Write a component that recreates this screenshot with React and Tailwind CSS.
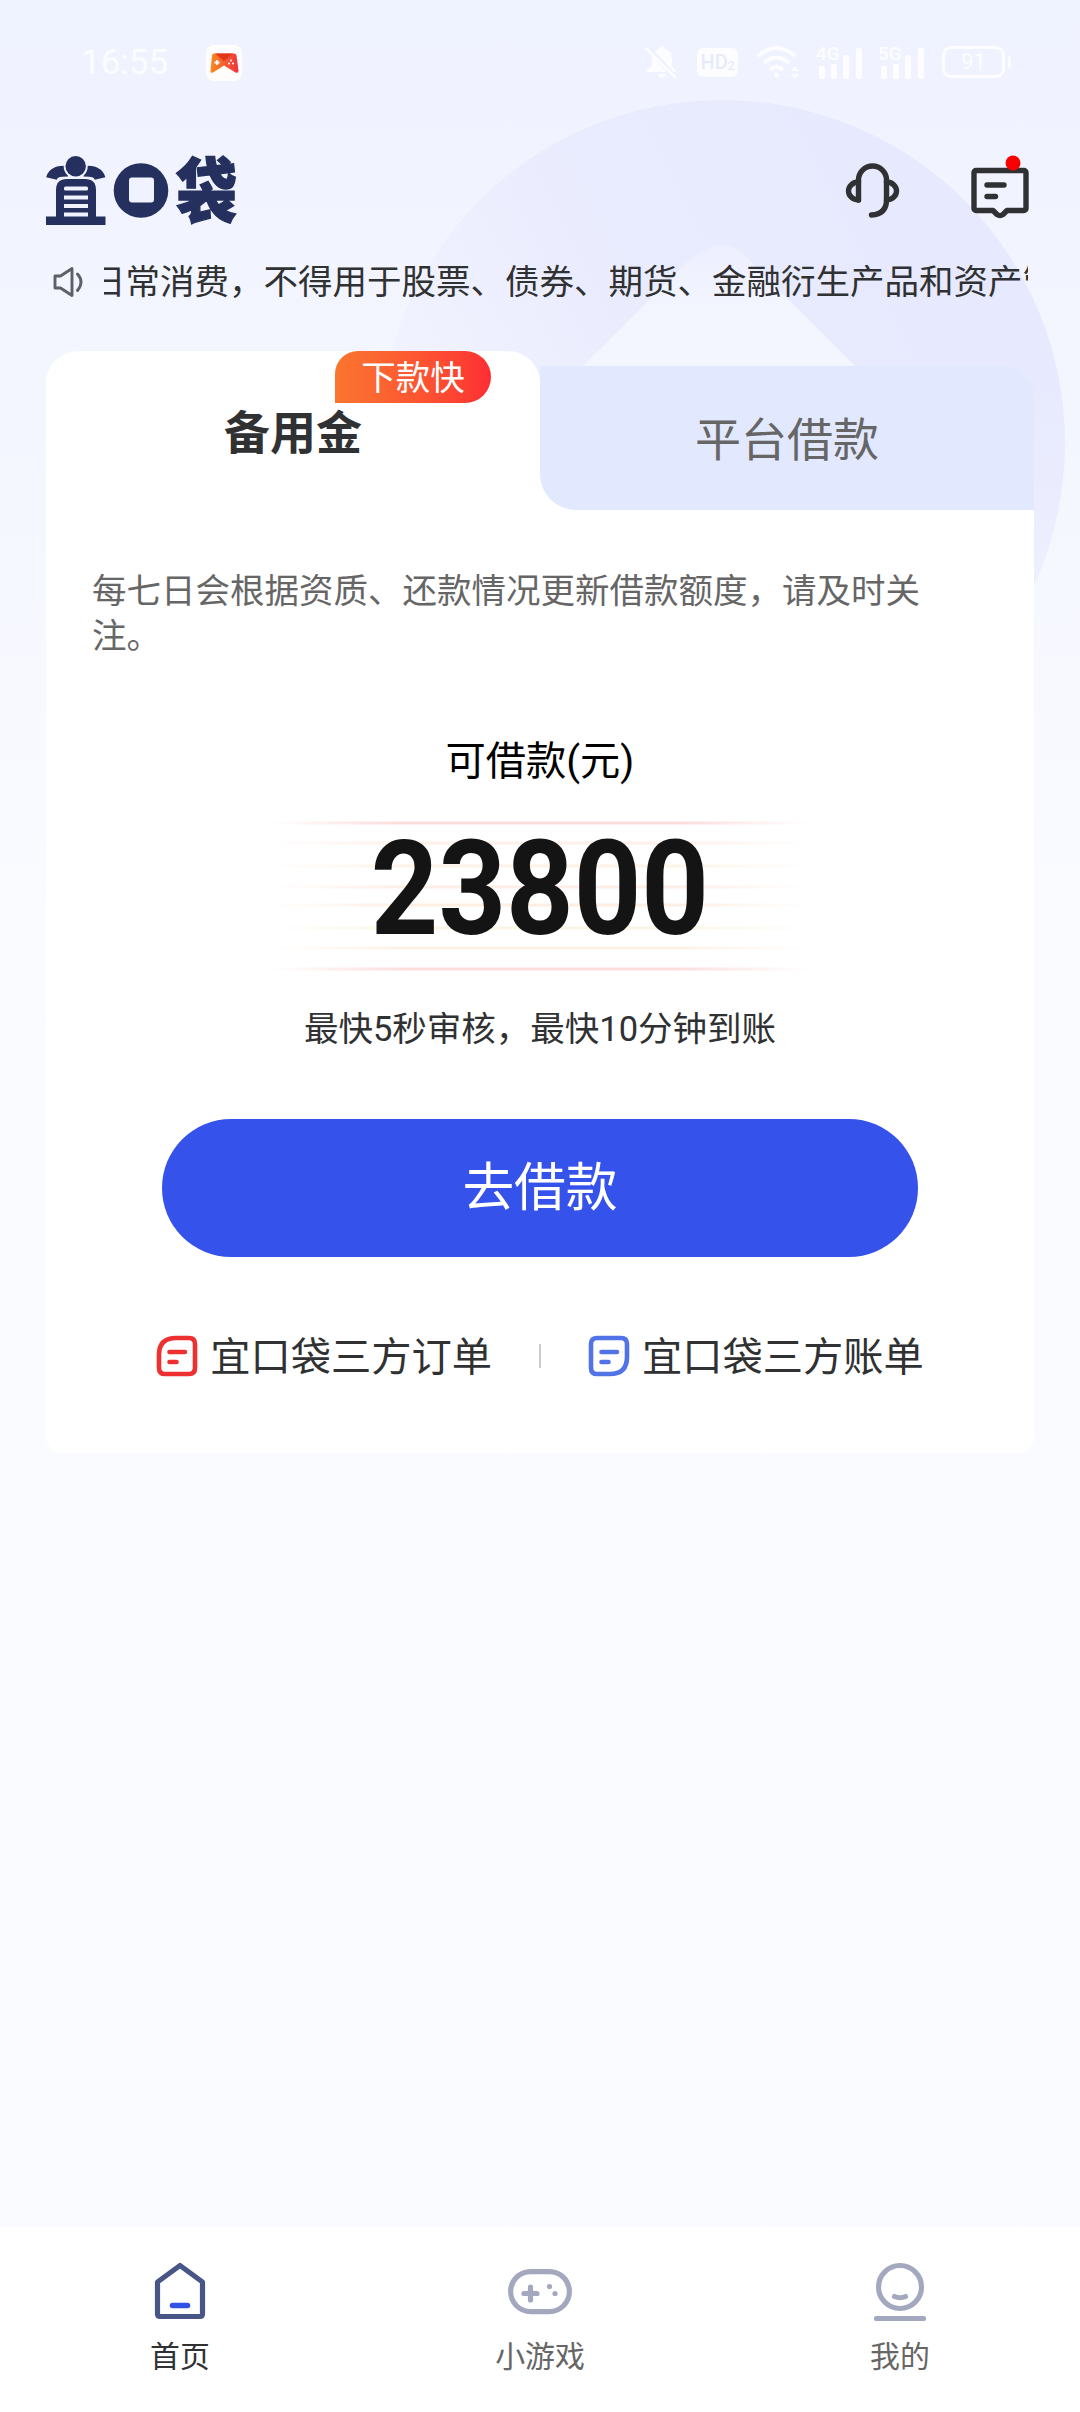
import clsx from 'clsx'

const LINES = [
  { y: 3, color: '#f58f8f', opacity: 0.32 },
  { y: 23, color: '#f9b79c', opacity: 0.2 },
  { y: 46, color: '#f7cf9c', opacity: 0.24 },
  { y: 67, color: '#f9b79c', opacity: 0.24 },
  { y: 85, color: '#f7c69c', opacity: 0.28 },
  { y: 108, color: '#ecd98f', opacity: 0.24 },
  { y: 128, color: '#f7c69c', opacity: 0.24 },
  { y: 149, color: '#f58f8f', opacity: 0.3 },
]

/* Fundo decorativo */
function Backdrop() {
  return (
    <svg className="absolute top-0 left-0" width="1080" height="910" viewBox="0 0 1080 910">
      <defs>
        <linearGradient id="disc" x1="0.75" y1="0.1" x2="0.05" y2="0.45">
          <stop offset="0" stopColor="#e7e9fe" />
          <stop offset="0.5" stopColor="#e9ebfe" />
          <stop offset="1" stopColor="#f1f3ff" />
        </linearGradient>
        <linearGradient id="disc-fade" x1="0" y1="0" x2="0" y2="1">
          <stop offset="0.4" stopColor="#f4f6ff" stopOpacity="0" />
          <stop offset="0.95" stopColor="#f4f6ff" stopOpacity="0.9" />
        </linearGradient>
        <linearGradient id="peak" x1="0" y1="0" x2="0" y2="1">
          <stop offset="0" stopColor="#edefff" />
          <stop offset="0.5" stopColor="#f4f6ff" />
        </linearGradient>
      </defs>
      <circle cx="722" cy="443" r="343" fill="url(#disc)" />
      <circle cx="722" cy="443" r="343" fill="url(#disc-fade)" />
      <path d="M704 250q17-10 34 0q8 5 16 15l140 140H544l140-140q10-10 20-15z" fill="url(#peak)" />
    </svg>
  )
}

function StatusBar() {
  return (
    <div className="flex h-[124px] items-start justify-between pl-[81px] pr-[69px] pt-[44px] text-white">
      <div className="flex items-center">
        <span className="w-[125px] text-[35px] leading-[38px] opacity-85">16:55</span>
        <svg width="36" height="36" viewBox="0 0 36 36">
          <defs>
            <linearGradient id="pad" x1="0" x2="1">
              <stop offset="0" stopColor="#fb8a1e" />
              <stop offset="1" stopColor="#ee3340" />
            </linearGradient>
          </defs>
          <rect width="36" height="36" rx="8" fill="#fffdfb" />
          <path d="M8 8.500h20q2 0 2.500 2l2 15q0 3-3 2L18 20.500 7 27.500q-3 1-2.500-2l1.500-15q.4-2 2-2z" fill="url(#pad)" />
          <path d="M9 8.500h18L18 16z" fill="#e2371c" />
          <path d="M8.500 17.500h5M11 15v5" stroke="#fff" strokeWidth="1.800" />
          <g fill="#fff">
            <circle cx="25" cy="15.500" r="1" />
            <circle cx="23" cy="18.500" r="1" />
            <circle cx="27" cy="18.500" r="1" />
          </g>
        </svg>
      </div>

      <div className="flex items-center gap-[18px] opacity-85">
        <svg width="34" height="36" viewBox="0 0 34 36" fill="#fff">
          <path d="M17 2q2 0 2.500 2.500Q27 7 27 16v6l4 5v1H2v-2l5-4v-6q0-9 7.500-11.500Q15 2 17 2zM13 30h8q-1 4-4 4t-4-4z" />
          <path d="M2 3l29 31" stroke="#edf0ff" strokeWidth="5" />
          <path d="M1 4l30 30" stroke="#fff" strokeWidth="2.500" />
        </svg>
        <div className="flex h-[29px] w-[41px] items-center justify-center rounded-md bg-white text-[20px] font-medium text-[#e6e9fb]">
          <span className="leading-7">HD</span>
          <span className="pt-2 text-[12px] leading-4">2</span>
        </div>
        <svg width="44" height="36" viewBox="0 0 44 36" fill="none" stroke="#fff" strokeWidth="4">
          <path d="M2 12q18-16 37 0M8 19q12-11 25 0M14 26q6.500-6 13 0" />
          <circle cx="20.500" cy="31" r="2.500" fill="#fff" stroke="none" />
          <path d="M35 27l4-5 4 5zM35 30l4 5 4-5z" fill="#fff" stroke="none" />
        </svg>
        <Signal label="4G" />
        <Signal label="5G" />
        <div className="flex items-center gap-[3px]">
          <div className="flex h-[32px] w-[63px] items-center justify-center rounded-[9px] border-[3px] border-white text-[22px] leading-[26px]">
            91
          </div>
          <div className="h-3 w-[3px] rounded-r bg-white" />
        </div>
      </div>
    </div>
  )
}

function Signal({ label }) {
  return (
    <svg className="-ml-0.5 -mr-0.5 overflow-visible" width="48" height="36" viewBox="0 0 48 36" fill="#fff">
      <text x="0" y="16" fontSize="19" fontWeight="500">{label}</text>
      <rect x="3" y="22" width="6" height="13" rx="2" />
      <rect x="15" y="20" width="6" height="15" rx="2" />
      <rect x="27" y="11" width="6" height="24" rx="2" />
      <rect x="40" y="4" width="6" height="31" rx="2" />
    </svg>
  )
}

function Logo() {
  return (
    <svg className="mt-8 overflow-visible" width="190" height="69" viewBox="0 0 190 69" fill="#25305f">
      {/* Pessoa */}
      <path d="M5.500 22.500C7 16.500 12 15 22 15M54 22.500C52.500 16.500 47.500 15 37.500 15" fill="none" stroke="#25305f" strokeWidth="11" />
      <circle cx="29.700" cy="10.500" r="12" fill="#f0f3ff" />
      <circle cx="29.700" cy="10.200" r="10.200" />
      <path d="M10 62V34q0-11 11-11h18q11 0 11 11v28z" />
      <rect y="60.500" width="59.500" height="8.500" />
      <g fill="#f0f3ff">
        <rect x="18" y="30.500" width="24" height="4" rx="1.500" />
        <rect x="18" y="39.500" width="24" height="4" />
        <rect x="18" y="48" width="24" height="4" />
        <rect x="18" y="56.500" width="24" height="4" />
      </g>
      {/* Moeda */}
      <circle cx="95" cy="34.500" r="27.300" />
      <rect x="83" y="21.500" width="25" height="25" rx="3" fill="#f0f3ff" />
      <text
        fontSize="61"
        fontWeight="900"
        stroke="#25305f"
        strokeWidth="1.200"
        transform="translate(130 60.500) scale(1 1.160)"
      >
        袋
      </text>
    </svg>
  )
}

function Header() {
  return (
    <header className="flex h-[124px] items-start justify-between pl-[46px] pr-[51px]">
      <Logo />
      <div className="flex items-start gap-[70px] pt-[31px]">
        <svg className="mt-[7px]" width="56" height="57" viewBox="0 0 56 57" fill="none" stroke="#303133" strokeWidth="5.400" strokeLinecap="round" strokeLinejoin="round">
          <path d="M13.500 38V18a14 14 0 0 1 28 0v20q0 14-15 15" />
          <path d="M13.500 20a10 9 0 0 0 0 18M41.500 20a10 9 0 0 1 0 18" />
        </svg>
        <svg width="58" height="64" viewBox="0 0 58 64" fill="none" stroke="#303133" strokeWidth="5.400" strokeLinecap="round" strokeLinejoin="round">
          <path d="M5 15.500H53a2 2 0 0 1 2 2V53.500a2 2 0 0 1-2 2H36l-4 4q-3 2-6 0l-4-4H5a2 2 0 0 1-2-2V17.500a2 2 0 0 1 2-2z" />
          <path d="M16 30h17M16 41.500h8.500" />
          <circle cx="42" cy="8" r="7.500" fill="#f70000" stroke="none" />
        </svg>
      </div>
    </header>
  )
}

/* Aviso rolante */
function Notice() {
  return (
    <div className="flex h-[68px] items-center px-[52px]">
      <svg width="34" height="34" viewBox="0 0 34 34" fill="none" stroke="#5f6066" strokeWidth="2.900" strokeLinejoin="round" strokeLinecap="round">
        <path d="M3 11h5.500L20 3.500v27L8.500 23H3z" />
        <path d="M25.500 9q7 8 0 16.500" />
      </svg>
      <div className="ml-[18px] flex-1 overflow-hidden whitespace-nowrap text-[34.5px] leading-[50px] text-[#303133]">
        <p className="-ml-[13px]">日常消费，不得用于股票、债券、期货、金融衍生产品和资产管理产品</p>
      </div>
    </div>
  )
}

function BillLink({ color, text, flip }) {
  return (
    <div className="flex items-center gap-3">
      <svg className="-mt-1" width="42" height="42" viewBox="0 0 42 42" fill="none" stroke={color} strokeWidth="4.600" strokeLinecap="round">
        <path
          d={
            flip
              ? 'M9 3H33q6 0 6 6V22Q39 39 22 39H9q-6 0-6-6V9q0-6 6-6z'
              : 'M20 3H33q6 0 6 6V33q0 6-6 6H9q-6 0-6-6V20Q3 3 20 3z'
          }
        />
        <path d="M13.500 17h15.500M13.500 27h7" />
      </svg>
      <span className="text-[40.25px] leading-[58px] text-[#303133]">{text}</span>
    </div>
  )
}

function LoanCard() {
  return (
    <section className="mx-[46px] mt-[35px]">
      {/* Abas */}
      <div className="flex h-[159px] items-end">
        <div className="relative flex h-full w-[494px] items-center justify-center rounded-t-[32px] bg-white pt-1">
          <span className="text-[46px] font-bold leading-[66px] text-[#303133]">备用金</span>
          <span className="absolute left-[289px] top-0 flex h-[52px] w-[156px] justify-center rounded-l-[23px] rounded-r-[26px] rounded-bl-none bg-linear-to-r from-[#fa752f] to-[#fd2d33] text-[34.5px] leading-[55px] text-white">
            下款快
          </span>
        </div>
        <div className="h-[144px] w-[494px] bg-linear-to-b from-transparent from-50% to-white to-50%">
          <div className="flex h-full items-center justify-center rounded-tr-[30px] rounded-bl-[36px] bg-[#e2e8fe] pt-1 text-[46px] leading-[66px] text-[#666]">
            平台借款
          </div>
        </div>
      </div>

      <div className="flex h-[943px] flex-col items-center rounded-b-[16px] bg-white">
        <p className="mr-[16px] mt-[59px] w-[880px] text-[34.5px] leading-[45px] text-[#666]">
          每七日会根据资质、还款情况更新借款额度，请及时关注。
        </p>
        <p className="mt-[78px] text-[40.25px] leading-[50px] text-black">可借款(元)</p>

        <div className="mt-[33px] grid h-[152px] w-[540px] place-items-center">
          <svg className="col-start-1 row-start-1" width="540" height="152" viewBox="0 0 540 152">
            {LINES.map(line => (
              <g key={line.y}>
                <linearGradient id={`line-${line.y}`} x1="0" x2="1">
                  <stop offset="0" stopColor={line.color} stopOpacity="0" />
                  <stop offset="0.25" stopColor={line.color} stopOpacity={line.opacity} />
                  <stop offset="0.75" stopColor={line.color} stopOpacity={line.opacity} />
                  <stop offset="1" stopColor={line.color} stopOpacity="0" />
                </linearGradient>
                <rect y={line.y - 1.5} width="540" height="3" fill={`url(#line-${line.y})`} />
              </g>
            ))}
          </svg>
          <span className="col-start-1 row-start-1 -mt-[13px] scale-x-[0.9] text-[131px] font-bold leading-none text-[#141414]">23800</span>
        </div>

        <p className="mt-[32px] text-[34.5px] leading-[50px] text-[#303133]">最快5秒审核，最快10分钟到账</p>
        <button className="mt-[65px] h-[138px] w-[756px] rounded-full bg-[#3552ea] pt-0.5 text-[51.75px] leading-[74px] text-white">
          去借款
        </button>

        <div className="mt-[72px] flex items-center gap-[47px]">
          <BillLink color="#ee3030" text="宜口袋三方订单" />
          <div className="-mt-1 h-[24px] w-[2px] bg-[#ccc]" />
          <BillLink color="#5273e8" text="宜口袋三方账单" flip />
        </div>
      </div>
    </section>
  )
}

function HomeIcon() {
  return (
    <svg width="64" height="64" viewBox="0 0 64 64" fill="none" strokeLinecap="round" strokeLinejoin="round">
      <path d="M32 7.500L54.500 24V56q0 2.500-2.500 2.500H12q-2.500 0-2.500-2.500V24z" stroke="#485587" strokeWidth="5.200" />
      <path d="M24.500 47.500h15" stroke="#3052e4" strokeWidth="5.500" />
    </svg>
  )
}

function GameIcon() {
  return (
    <svg width="64" height="64" viewBox="0 0 64 64" fill="none" stroke="#a3a8bf" strokeWidth="5.200" strokeLinecap="round">
      <rect x="2.600" y="13.600" width="58.800" height="40" rx="20" />
      <path d="M16 35.500h13M22.500 29v13" />
      <circle cx="41.500" cy="28.500" r="2.600" fill="#a3a8bf" stroke="none" />
      <circle cx="47" cy="35.500" r="2.600" fill="#a3a8bf" stroke="none" />
    </svg>
  )
}

function MineIcon() {
  return (
    <svg width="64" height="64" viewBox="0 0 64 64" fill="none" stroke="#a3a8bf" strokeWidth="5.200" strokeLinecap="round">
      <circle cx="32" cy="29" r="21.500" />
      <path d="M26.500 38.500q5.500 2.500 11 0M8.500 60.500h47" />
    </svg>
  )
}

const TABS = [
  { label: '首页', Icon: HomeIcon, active: true },
  { label: '小游戏', Icon: GameIcon },
  { label: '我的', Icon: MineIcon },
]

export default function App() {
  return (
    <div className="relative flex h-[2412px] w-[1080px] flex-col overflow-hidden bg-[#fafbff] bg-linear-to-b from-[#eff2ff] to-[#fafbff] to-[910px] font-['Roboto','Noto_Sans_CJK_SC',sans-serif]">
      <Backdrop />
      <main className="relative flex-1">
        <StatusBar />
        <Header />
        <Notice />
        <LoanCard />
      </main>

      <nav className="relative grid h-[185px] grid-cols-3 bg-white">
        {TABS.map(({ label, Icon, active }) => (
          <div key={label} className="flex flex-col items-center pt-[31px]">
            <Icon />
            <span className={clsx('mt-3.5 text-[29.9px] leading-[42px]', active ? 'text-[#303133]' : 'text-[#666]')}>
              {label}
            </span>
          </div>
        ))}
      </nav>
    </div>
  )
}
